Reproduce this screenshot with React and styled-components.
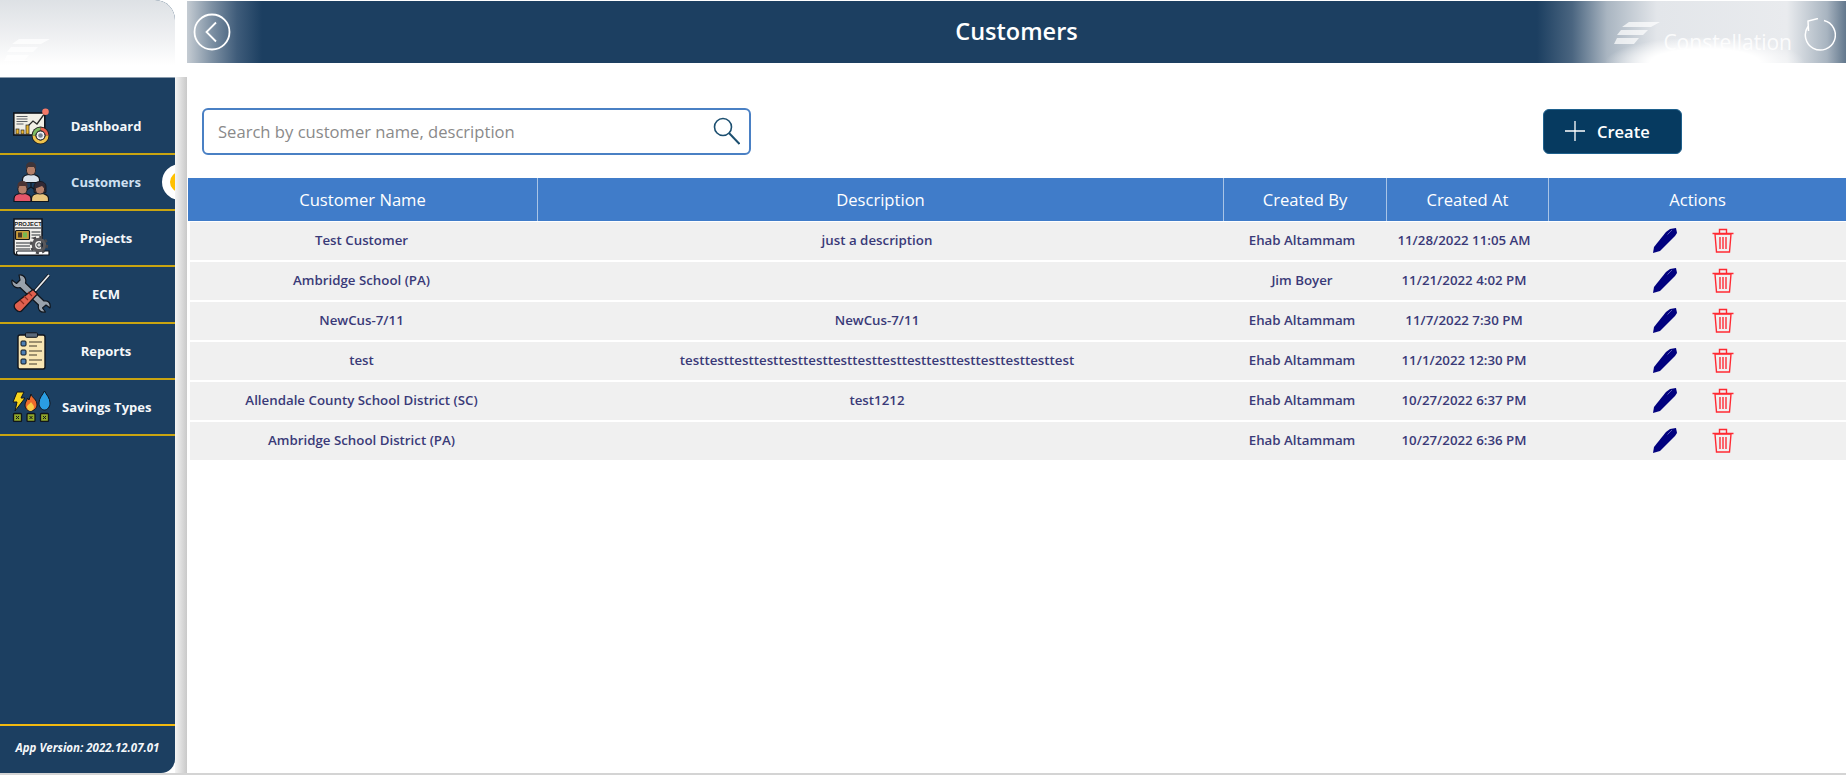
import React from 'react'
import styled, {createGlobalStyle} from 'styled-components'

const GlobalStyle = createGlobalStyle`
    html, body {
        margin: 0;
        padding: 0;
        background: #fff;
    }
    body {
        font-family: "Open Sans", "Liberation Sans", sans-serif;
    }
`

const customers = [
    {name: 'Test Customer', description: 'just a description', by: 'Ehab Altammam', at: '11/28/2022 11:05 AM'},
    {name: 'Ambridge School (PA)', description: '', by: 'Jim Boyer', at: '11/21/2022 4:02 PM'},
    {name: 'NewCus-7/11', description: 'NewCus-7/11', by: 'Ehab Altammam', at: '11/7/2022 7:30 PM'},
    {name: 'test', description: 'test'.repeat(16), by: 'Ehab Altammam', at: '11/1/2022 12:30 PM'},
    {name: 'Allendale County School District (SC)', description: 'test1212', by: 'Ehab Altammam', at: '10/27/2022 6:37 PM'},
    {name: 'Ambridge School District (PA)', description: '', by: 'Ehab Altammam', at: '10/27/2022 6:36 PM'},
]

const DashboardIcon = () => (
    <svg width="37" height="37" viewBox="0 0 37 37">
        <rect x="0.800" y="5" width="31" height="22" fill="#f1efe6" stroke="#10151c" strokeWidth="1.600"/>
        <path d="M3.500 8.500h11M3.500 11h11M3.500 13.500h11M3.500 16h7" stroke="#5d6166" strokeWidth="1.200"/>
        <path d="M15 18l5-5 4 3 8-11" fill="none" stroke="#2a2a2a" strokeWidth="1.300"/>
        <circle cx="32.500" cy="3.800" r="3.300" fill="#f47a68"/>
        <rect x="3" y="21" width="3" height="5" fill="#eab52e" stroke="#222" strokeWidth=".7"/>
        <rect x="8" y="22" width="3" height="4" fill="#eab52e" stroke="#222" strokeWidth=".7"/>
        <rect x="13" y="17" width="3" height="9" fill="#eab52e" stroke="#222" strokeWidth=".7"/>
        <circle cx="27.500" cy="27.500" r="9" fill="#222"/>
        <path d="M27.500 19.500a8 8 0 0 1 8 8h-3a5 5 0 0 0-5-5z" fill="#e8604c"/>
        <path d="M35.500 27.500a8 8 0 0 1-16 0h3a5 5 0 0 0 10 0z" fill="#eec34d"/>
        <path d="M19.500 27.500a8 8 0 0 1 8-8v3a5 5 0 0 0-5 5z" fill="#7dbb62"/>
        <circle cx="27.500" cy="27.500" r="4.500" fill="#eef0f2" stroke="#222"/>
        <circle cx="27.500" cy="27.500" r="2.300" fill="#74818e"/>
    </svg>
)

const Person = ({x, y, shirt, hair, long}) => (
    <g transform={`translate(${x} ${y})`}>
        {long && <path d="M-6 10V4c0-3 2.500-5 6-5s6 2 6 5v6z" fill={hair} stroke="#10151c" strokeWidth=".8"/>}
        <path d="M-8.500 19v-3c0-3 3-5 8.500-5s8.500 2 8.500 5v3z" fill={shirt} stroke="#10151c" strokeWidth="1.200"/>
        <rect x="-4.500" y="2" width="9" height="9.500" rx="3.800" fill="#b4806a" stroke="#10151c" strokeWidth=".8"/>
        {!long && <path d="M-5 6V3c0-3 2-4.500 5-4.500S5 0 5 3v3L3 3.500h-6z" fill={hair}/>}
        {long && <path d="M-4.500 6V3.500c0-2 2-3 4.500-3s4.500 1 4.500 3V6L2 3.500z" fill={hair}/>}
    </g>
)

const CustomersIcon = () => (
    <svg width="36" height="40" viewBox="0 0 36 40">
        <path d="M18 19v6M9 31l9-6 9 6" fill="none" stroke="#10151c" strokeWidth="1.100"/>
        <Person x={18} y={1.500} shirt="#d9e2ec" hair="#3e3438"/>
        <Person x={9.500} y={20.500} shirt="#e5566a" hair="#4a3434"/>
        <Person x={27} y={20.500} shirt="#e8c67e" hair="#332a35" long/>
    </svg>
)

const ProjectsIcon = () => (
    <svg width="38" height="40" viewBox="0 0 38 40">
        <path d="M2 1h28v36H5c-2 0-3-1-3-3z" fill="#f2f1ee" stroke="#10151c" strokeWidth="1.500"/>
        <ProjectWord x="16" y="8.200" textAnchor="middle">PROJECT</ProjectWord>
        <path d="M3 10h26" stroke="#10151c" strokeWidth="1"/>
        <rect x="3.500" y="12.500" width="14" height="9" rx="1" fill="#c89b3c" stroke="#10151c" strokeWidth="1.200"/>
        <rect x="6" y="14.500" width="4" height="5" fill="#4a3a25"/>
        <rect x="11" y="14.500" width="4" height="5" fill="#78b84e"/>
        <path d="M19.500 14h9M19.500 17h9M19.500 20h4M4 25h14M4 28h14M4 31h14" stroke="#6a6d70" strokeWidth="1.300"/>
        <path d="M6 37h31v-4H6c-2 0-2 4 0 4z" fill="#fff" stroke="#10151c" strokeWidth="1.200"/>
        <circle cx="27" cy="27" r="5.600" fill="none" stroke="#5a595c" strokeWidth="3.400"/>
        <circle cx="27" cy="27" r="8" fill="none" stroke="#4a494c" strokeWidth="2.400" strokeDasharray="3 3.300"/>
        <circle cx="27" cy="27" r="2.200" fill="#d9d9d9" stroke="#10151c" strokeWidth=".8"/>
    </svg>
)

const EcmIcon = () => (
    <svg width="40" height="40" viewBox="0 0 40 40">
        <path d="M8 1c4-1 8 3 6.500 8L33 27c4-1 7 2 6 7l-4-3-3.500 3 3 4c-5 1-8-2-7-7L9 13.500C4 15 0 11 1 6l4.500 3.500L9 6z" fill="#9aa2ab" stroke="#10151c" strokeWidth="1.200" strokeLinejoin="round"/>
        <path d="M38 1l-14 16" stroke="#10151c" strokeWidth="3.400"/>
        <path d="M38 1l-14 16" stroke="#e8ebee" strokeWidth="1.800"/>
        <path d="M22 15.500l4.500 4.500L11 36.500c-3 3.500-10-2.500-7-7z" fill="#e0604e" stroke="#10151c" strokeWidth="1.200"/>
        <path d="M9 26l4 4M13 22l4 4M17 18l4 4" stroke="#8e2c22" strokeWidth="1.100"/>
    </svg>
)

const ReportsIcon = () => (
    <svg width="29" height="38" viewBox="0 0 29 38">
        <rect x="1" y="3" width="27" height="34" rx="2" fill="#f8e6b4" stroke="#10151c" strokeWidth="1.400"/>
        <rect x="8.500" y="0.800" width="12" height="4.500" rx="1" fill="#5b6a7b" stroke="#10151c"/>
        <rect x="4" y="9" width="5" height="5" rx="1" fill="#4d7fb5" stroke="#10151c"/>
        <rect x="4" y="18" width="5" height="5" rx="1" fill="#4d7fb5" stroke="#10151c"/>
        <rect x="4" y="27" width="5" height="5" rx="1" fill="#4d7fb5" stroke="#10151c"/>
        <path d="M12 10h13M12 14h8M12 19h13M12 23h8M12 28h13M12 32h8" stroke="#7d7358" strokeWidth="1.400"/>
    </svg>
)

const SavingsIcon = () => (
    <svg width="39" height="31" viewBox="0 0 39 31">
        <path d="M5 1h7l-3 6h4L3 20l2-9H1z" fill="#f7d51d" stroke="#10151c" strokeWidth="1"/>
        <path d="M19 3c1 4 6 5 6 11 0 3-3 6-6.500 6S13 17 13 14c0-3 2-4 2.500-7l1.500 2z" fill="#ec6a2c" stroke="#10151c" strokeWidth="1"/>
        <path d="M19 11c1 2 3 3 3 5 0 2-1.500 4-3.500 4S15 18 15 16s3-3 4-5z" fill="#f8cb45"/>
        <path d="M32.500 0c2 4 5.500 7 5.500 12 0 4-2.500 7-5.500 7S27 16 27 12c0-5 3.500-8 5.500-12z" fill="#2a9de2" stroke="#10151c" strokeWidth="1"/>
        <rect x="1.500" y="22.500" width="8" height="8" rx="1" fill="#8fa62a" stroke="#10151c" strokeWidth="1.300"/>
        <rect x="15" y="22.500" width="8" height="8" rx="1" fill="#8fa62a" stroke="#10151c" strokeWidth="1.300"/>
        <rect x="28.500" y="22.500" width="8" height="8" rx="1" fill="#8fa62a" stroke="#10151c" strokeWidth="1.300"/>
        <path d="M4 25l3 3m0-3l-3 3M17.500 25l3 3m0-3l-3 3M31 25l3 3m0-3l-3 3" stroke="#10151c" strokeWidth="1"/>
    </svg>
)

const menu = [
    {title: 'Dashboard', icon: <DashboardIcon/>},
    {title: 'Customers', icon: <CustomersIcon/>, active: true},
    {title: 'Projects', icon: <ProjectsIcon/>},
    {title: 'ECM', icon: <EcmIcon/>},
    {title: 'Reports', icon: <ReportsIcon/>},
    {title: 'Savings Types', icon: <SavingsIcon/>},
]

const Logo = () => (
    <svg width="46" height="22" viewBox="0 0 46 22">
        <path d="M15 0h31l-9 5H8zM7 8h27l-5 5H3zM3 16h22l-5 6H0z" fill="#fff" opacity=".7"/>
    </svg>
)

const PenIcon = () => (
    <svg width="24" height="25" viewBox="0 0 24 25">
        <path d="M0 25l1-6L13 4l4-3 6-1 1 5-2 3L7 23z" fill="#02027f"/>
        <path d="M14.500 6.500L19 2" stroke="#5a5ab8" strokeWidth="1"/>
    </svg>
)

const TrashIcon = () => (
    <svg width="22" height="25" viewBox="0 0 22 25" fill="none" stroke="#ff2a33" strokeWidth="1.400">
        <path d="M.5 5.500h21M7.500 5V1.500h7V5"/>
        <path d="M3 6l1.500 18h13L19 6z"/>
        <path d="M8 9v12M11 9v12M14 9v12"/>
    </svg>
)

const App = () => {
    return (
        <Page>
            <GlobalStyle/>
            <Sidebar>
                <SideLogo><Logo/></SideLogo>
                <Menu>
                    {menu.map(item => (
                        <MenuRow key={item.title}>
                            <MenuIcon>{item.icon}</MenuIcon>
                            <MenuLabel $active={item.active}>{item.title}</MenuLabel>
                            {item.active && <ActiveMark/>}
                        </MenuRow>
                    ))}
                </Menu>
                <Version>App Version: 2022.12.07.01</Version>
            </Sidebar>
            <Shadow/>
            <Main>
                <Header>
                    <BackBtn>
                        <svg width="38" height="38" viewBox="0 0 38 38" fill="none" stroke="#fff">
                            <circle cx="19" cy="19" r="17.500" strokeWidth="1.800"/>
                            <path d="M23 9.500L13.500 19l9.500 9.500" strokeWidth="1.800"/>
                        </svg>
                    </BackBtn>
                    <Title>Customers</Title>
                    <HeaderRight>
                        <HeaderLogo>
                            <Logo/>
                            <span>Constellation</span>
                        </HeaderLogo>
                        <svg width="32" height="33" viewBox="0 0 32 33" fill="none" stroke="#fff" strokeWidth="1.500">
                            <path d="M20 2.500a15 15 0 1 1-16 6"/>
                            <path d="M14 .5L4 3l.5 10"/>
                        </svg>
                    </HeaderRight>
                </Header>
                <Toolbar>
                    <Search>
                        <SearchInput placeholder="Search by customer name, description" readOnly/>
                        <svg width="27" height="28" viewBox="0 0 27 28" fill="none" stroke="#1c4f70" strokeWidth="1.600">
                            <circle cx="10" cy="10" r="8.500"/>
                            <path d="M16 16l10.500 11" strokeWidth="2"/>
                        </svg>
                    </Search>
                    <CreateBtn>
                        <svg width="22" height="22" viewBox="0 0 22 22" stroke="#fff" strokeWidth="1.300">
                            <path d="M11 1v20M1 11h20"/>
                        </svg>
                        Create
                    </CreateBtn>
                </Toolbar>
                <TableHead>
                    <HeadCell>Customer Name</HeadCell>
                    <HeadCell>Description</HeadCell>
                    <HeadCell>Created By</HeadCell>
                    <HeadCell>Created At</HeadCell>
                    <HeadCell>Actions</HeadCell>
                </TableHead>
                {customers.map(c => (
                    <Row key={c.at}>
                        <Cell>{c.name}</Cell>
                        <Cell>{c.description}</Cell>
                        <Cell>{c.by}</Cell>
                        <Cell>{c.at}</Cell>
                        <Actions>
                            <PenIcon/>
                            <TrashIcon/>
                        </Actions>
                    </Row>
                ))}
            </Main>
        </Page>
    )
}

export default App


const ProjectWord = styled.text`
    font-family: "Liberation Sans", sans-serif;
    font-weight: 700;
    font-size: 5.800px;
    fill: #222;
`

const Page = styled.div`
    width: 1846px;
    height: 775px;
    display: flex;
    overflow: hidden;
    border-bottom: 2px solid #d4d4d4;
    box-sizing: border-box;
`

const Sidebar = styled.div`
    width: 175px;
    height: 773px;
    flex: none;
    display: flex;
    flex-direction: column;
    background: #1c3f61;
    border-radius: 0 20px 14px 0;
    overflow: hidden;
`

const SideLogo = styled.div`
    height: 78px;
    flex: none;
    padding: 39px 0 0 4px;
    box-sizing: border-box;
    background: linear-gradient(180deg, #dde1e5 0%, #f0f1f3 50%, #ffffff 85%);
    border-bottom: 1px solid #8a9cad;
`

const Menu = styled.div`
    flex: 1;
`

const MenuRow = styled.div`
    position: relative;
    height: 56.200px;
    box-sizing: border-box;
    display: flex;
    align-items: center;
    border-bottom: 2px solid #c9a411;

    &:first-child {
        height: 77px;
        padding-top: 21px;
    }
`

const MenuIcon = styled.div`
    width: 62px;
    flex: none;
    display: flex;
    justify-content: center;
`

const MenuLabel = styled.div`
    width: 88px;
    text-align: center;
    font-size: 13px;
    font-weight: 700;
    color: ${props => props.$active ? '#cfe0f2' : '#f4f7fa'};
    white-space: nowrap;
`

const ActiveMark = styled.div`
    position: absolute;
    right: -23px;
    top: 9px;
    width: 36px;
    height: 36px;
    border-radius: 50%;
    background: #ffc000;
    border: 8px solid #fff;
    box-sizing: border-box;
`

const Version = styled.div`
    height: 49px;
    flex: none;
    box-sizing: border-box;
    border-top: 2px solid #f2b90f;
    padding-top: 14px;
    text-align: center;
    font-size: 11.500px;
    font-weight: 700;
    font-style: italic;
    color: #f4f7fa;
    white-space: nowrap;
`

const Shadow = styled.div`
    width: 12px;
    height: 773px;
    flex: none;
    background: linear-gradient(90deg, #f4f4f4 0%, #dcdcdc 55%, #c9c9c9 100%);
    clip-path: inset(77px 0 0 0);
`

const Main = styled.div`
    flex: 1;
    min-width: 0;
    display: flex;
    flex-direction: column;
`

const Header = styled.div`
    height: 62px;
    flex: none;
    margin-top: 1px;
    position: relative;
    display: flex;
    align-items: center;
    justify-content: center;
    background:
        radial-gradient(ellipse 100px 26px at 1518px 62px, #ffffff 55%, rgba(255, 255, 255, 0) 100%),
        linear-gradient(90deg, #c5ccd3 0px, #7d90a3 25px, #3f5c7a 50px, #1c3f61 75px, #1c3f61 1350px, #4a6580 1385px, #a9b5c1 1420px, #e3e6ea 1470px, #e9ebee 1600px, #a8b4c0 1640px, #62778c 1659px);
`

const BackBtn = styled.div`
    position: absolute;
    left: 6px;
    top: 12px;
    height: 38px;
`

const Title = styled.h1`
    margin: 0 0 3px;
    font-size: 23.500px;
    font-weight: 600;
    color: #fff;
`

const HeaderRight = styled.div`
    position: absolute;
    right: 10px;
    top: 17px;
    display: flex;
    align-items: flex-start;
    gap: 12px;
`

const HeaderLogo = styled.div`
    display: flex;
    align-items: flex-start;
    gap: 3px;
    padding-top: 4px;

    span {
        font-size: 21px;
        line-height: 29px;
        color: rgba(255, 255, 255, 0.85);
        margin-top: 6px;
    }
`

const Toolbar = styled.div`
    height: 115px;
    flex: none;
    display: flex;
    align-items: center;
    padding: 21px 164px 0 15px;
    box-sizing: border-box;
    justify-content: space-between;
`

const Search = styled.div`
    width: 549px;
    height: 47px;
    box-sizing: border-box;
    display: flex;
    align-items: center;
    padding: 0 9px 0 14px;
    border: 2px solid #4a80c4;
    border-radius: 6px;
`

const SearchInput = styled.input`
    flex: 1;
    min-width: 0;
    border: 0;
    outline: 0;
    padding: 0;
    background: none;
    font: 400 16.600px "Open Sans", "Liberation Sans", sans-serif;
    &::placeholder {
        color: #8a8a8a;
        opacity: 1;
    }
`

const CreateBtn = styled.div`
    width: 139px;
    height: 45px;
    box-sizing: border-box;
    display: flex;
    align-items: center;
    gap: 11px;
    padding-left: 20px;
    background: #063a60;
    border: 1px solid #1f618d;
    border-radius: 6px;
    color: #fff;
    font-size: 16.500px;
    font-weight: 600;
`

const TableHead = styled.div`
    height: 43px;
    flex: none;
    margin-left: 1px;
    display: grid;
    grid-template-columns: 350px 686px 163px 162px 1fr;
    background: #407cc9;
`

const HeadCell = styled.div`
    display: flex;
    align-items: center;
    justify-content: center;
    color: #fff;
    font-size: 16.600px;
    padding-bottom: 1px;
    box-sizing: border-box;
    border-right: 1px solid #a9c4e6;

    &:last-child {
        border-right: 0;
    }
`

const Row = styled.div`
    height: 38px;
    flex: none;
    margin: 1px 0 1px 3px;
    padding-bottom: 2px;
    box-sizing: border-box;
    display: grid;
    grid-template-columns: 343px 688px 162px 162px 1fr;
    background: #f0f0f0;
`

const Cell = styled.div`
    display: flex;
    align-items: center;
    justify-content: center;
    color: #3a3a78;
    font-size: 13.300px;
    font-weight: 600;
    white-space: nowrap;
`

const Actions = styled.div`
    display: flex;
    align-items: center;
    gap: 35px;
    padding-left: 108px;
`
